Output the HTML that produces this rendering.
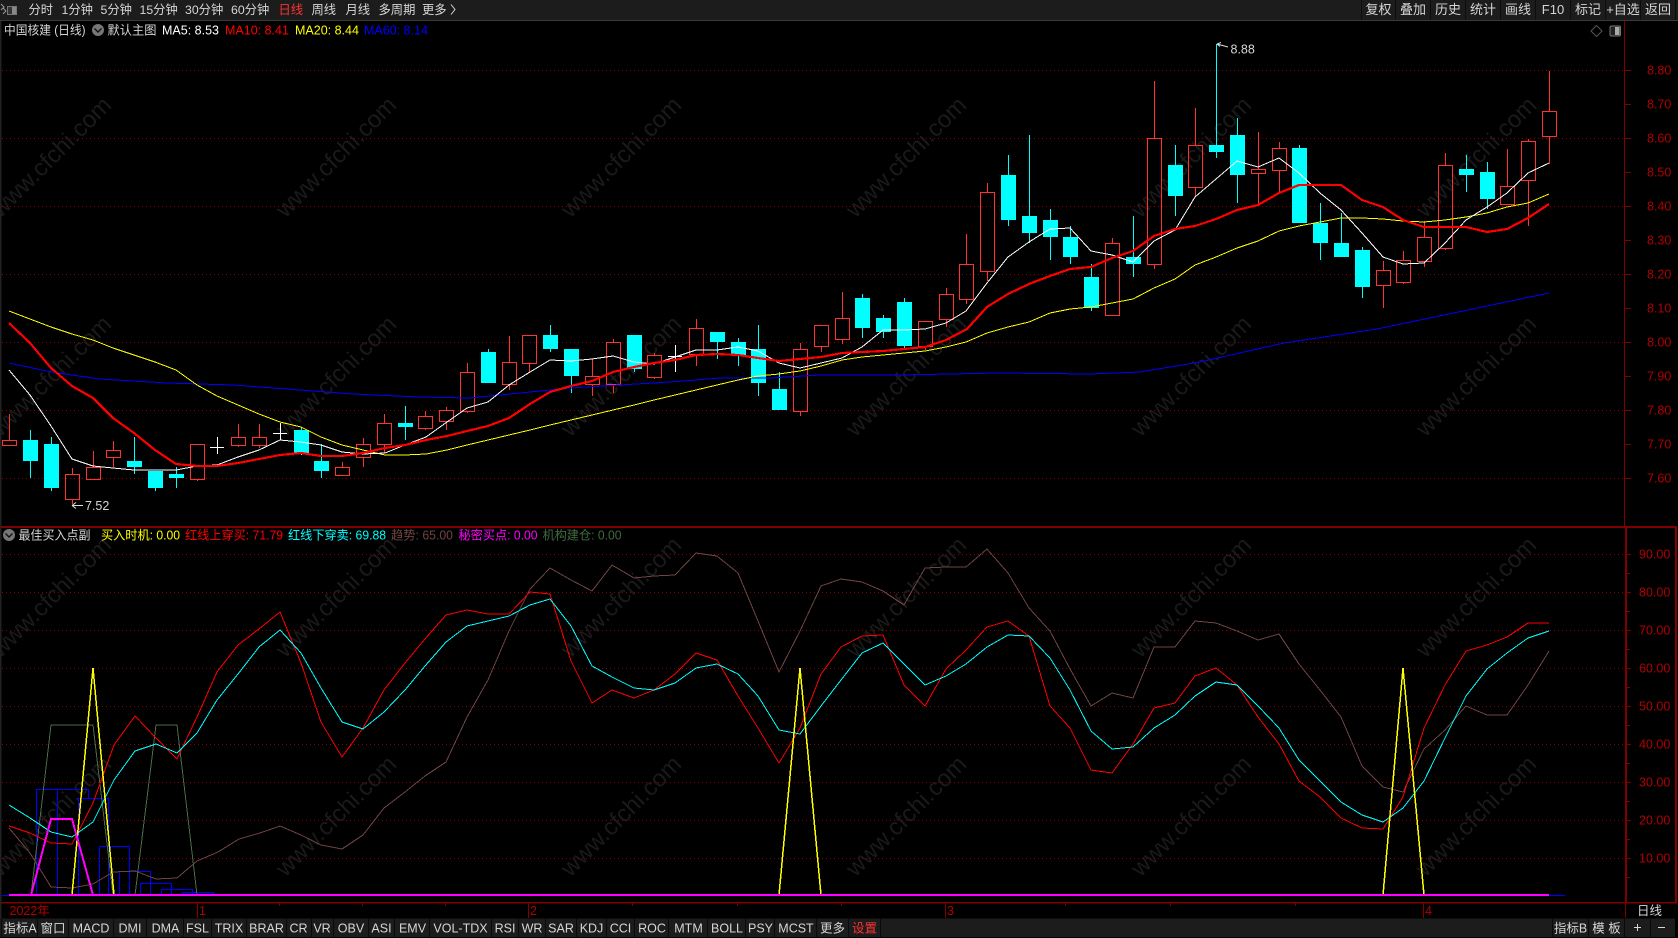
<!DOCTYPE html>
<html lang="zh"><head><meta charset="utf-8"><title>中国核建</title>
<style>
html,body{margin:0;padding:0;background:#000;width:1678px;height:938px;overflow:hidden}
svg{display:block;position:absolute;left:0;top:0}
text{font-family:"Liberation Sans","Noto Sans CJK SC",sans-serif;font-size:12.5px}
.n{fill:#d6d6d6}
.t{fill:#d6d6d6;font-size:12.3px}
.m{text-anchor:middle;fill:#d6d6d6}
.r{fill:#b00000}
.wm text{font-size:24px;fill:#1a1a1a;text-anchor:middle}
.c{shape-rendering:crispEdges;fill:none}
</style></head><body>
<svg width="1678" height="938" viewBox="0 0 1678 938">
<rect width="1678" height="938" fill="#000"/>
<!-- watermark -->
<g class="wm" transform="translate(-4,0)">
<text transform="translate(55,157) rotate(-45)" y="8">www.cfchi.com</text><text transform="translate(340,157) rotate(-45)" y="8">www.cfchi.com</text><text transform="translate(625,157) rotate(-45)" y="8">www.cfchi.com</text><text transform="translate(910,157) rotate(-45)" y="8">www.cfchi.com</text><text transform="translate(1195,157) rotate(-45)" y="8">www.cfchi.com</text><text transform="translate(1480,157) rotate(-45)" y="8">www.cfchi.com</text>
<text transform="translate(55,376) rotate(-45)" y="8">www.cfchi.com</text><text transform="translate(340,376) rotate(-45)" y="8">www.cfchi.com</text><text transform="translate(625,376) rotate(-45)" y="8">www.cfchi.com</text><text transform="translate(910,376) rotate(-45)" y="8">www.cfchi.com</text><text transform="translate(1195,376) rotate(-45)" y="8">www.cfchi.com</text><text transform="translate(1480,376) rotate(-45)" y="8">www.cfchi.com</text>
<text transform="translate(55,597) rotate(-45)" y="8">www.cfchi.com</text><text transform="translate(340,597) rotate(-45)" y="8">www.cfchi.com</text><text transform="translate(625,597) rotate(-45)" y="8">www.cfchi.com</text><text transform="translate(910,597) rotate(-45)" y="8">www.cfchi.com</text><text transform="translate(1195,597) rotate(-45)" y="8">www.cfchi.com</text><text transform="translate(1480,597) rotate(-45)" y="8">www.cfchi.com</text>
<text transform="translate(55,816) rotate(-45)" y="8">www.cfchi.com</text><text transform="translate(340,816) rotate(-45)" y="8">www.cfchi.com</text><text transform="translate(625,816) rotate(-45)" y="8">www.cfchi.com</text><text transform="translate(910,816) rotate(-45)" y="8">www.cfchi.com</text><text transform="translate(1195,816) rotate(-45)" y="8">www.cfchi.com</text><text transform="translate(1480,816) rotate(-45)" y="8">www.cfchi.com</text>
</g>
<!-- grids -->
<path class="c" stroke="#900000" stroke-dasharray="1 3" d="M2 70.5H1625M2 138.5H1625M2 206.5H1625M2 274.5H1625M2 342.5H1625M2 410.5H1625M2 478.5H1625M2 554.5H1625M2 592.5H1625M2 630.5H1625M2 668.5H1625M2 706.5H1625M2 744.5H1625M2 782.5H1625M2 820.5H1625M2 858.5H1625"/>
<!-- axes -->
<path class="c" stroke="#800000" d="M1624.5 21V527M1625 70.5h6M1625 104.5h6M1625 138.5h6M1625 172.5h6M1625 206.5h6M1625 240.5h6M1625 274.5h6M1625 308.5h6M1625 342.5h6M1625 376.5h6M1625 410.5h6M1625 444.5h6M1625 478.5h6M1625 554.5h6M1625 592.5h6M1625 630.5h6M1625 668.5h6M1625 706.5h6M1625 744.5h6M1625 782.5h6M1625 820.5h6M1625 858.5h6M1627 573.5h3M1627 611.5h3M1627 649.5h3M1627 687.5h3M1627 725.5h3M1627 763.5h3M1627 801.5h3M1627 839.5h3M1627 877.5h3"/>
<rect x="0" y="526" width="1677" height="2" fill="#800000"/>
<rect x="1625" y="527" width="2" height="376" fill="#800000"/>
<rect x="1675" y="527" width="2" height="376" fill="#800000"/>
<rect x="0" y="902" width="1677" height="1.5" fill="#800000"/>
<rect x="0" y="20" width="1.5" height="900" fill="#222"/>
<path class="c" stroke="#800000" d="M197.5 903V918M528.5 903V918M945.5 903V918M1423.5 903V918M1625.5 903V918M279.5 903v3M362.5 903v3M445.5 903v3M632.5 903v3M737.5 903v3M841.5 903v3M1065.5 903v3M1170.5 903v3M1295.5 903v3"/>
<!-- axis labels -->
<g class="r">
<text x="1647" y="74.5">8.80</text><text x="1647" y="108.5">8.70</text><text x="1647" y="142.5">8.60</text><text x="1647" y="176.5">8.50</text><text x="1647" y="210.5">8.40</text><text x="1647" y="244.5">8.30</text><text x="1647" y="278.5">8.20</text><text x="1647" y="312.5">8.10</text><text x="1647" y="346.5">8.00</text><text x="1647" y="380.5">7.90</text><text x="1647" y="414.5">7.80</text><text x="1647" y="448.5">7.70</text><text x="1647" y="482.5">7.60</text>
<text x="1639" y="558.5">90.00</text><text x="1639" y="596.5">80.00</text><text x="1639" y="634.5">70.00</text><text x="1639" y="672.5">60.00</text><text x="1639" y="710.5">50.00</text><text x="1639" y="748.5">40.00</text><text x="1639" y="786.5">30.00</text><text x="1639" y="824.5">20.00</text><text x="1639" y="862.5">10.00</text>
<text x="9.5" y="915">2022年</text><text x="199" y="915">1</text><text x="530" y="915">2</text><text x="947" y="915">3</text><text x="1425" y="915">4</text>
</g>
<text class="n" x="1637" y="915">日线</text>
<!-- candles red -->
<path class="c" stroke="#ff3232" d="
M9.5 414V440M2.5 440.5H16.5V445.5H2.5Z
M72.5 468V474M65.5 474.5H79.5V499.5H65.5ZM72.5 499V504
M93.5 451V467M86.5 467.5H100.5V479.5H86.5Z
M113.5 441V450M106.5 450.5H120.5V457.5H106.5ZM113.5 457V467
M190.5 444.5H204.5V479.5H190.5ZM197.5 479V481
M238.5 424V437M231.5 437.5H245.5V445.5H231.5ZM238.5 445V447
M259.5 424V437M252.5 437.5H266.5V445.5H252.5ZM259.5 445V448
M342.5 462V467M335.5 467.5H349.5V475.5H335.5Z
M363.5 438V444M356.5 444.5H370.5V457.5H356.5ZM363.5 457V467
M384.5 414V423M377.5 423.5H391.5V444.5H377.5ZM384.5 444V453
M425.5 411V416M418.5 416.5H432.5V428.5H418.5ZM425.5 428V430
M446.5 407V410M439.5 410.5H453.5V421.5H439.5ZM446.5 421V430
M467.5 363V372M460.5 372.5H474.5V411.5H460.5ZM467.5 411V413
M509.5 336V362M502.5 362.5H516.5V384.5H502.5ZM509.5 384V390
M522.5 335.5H536.5V363.5H522.5ZM529.5 363V373
M592.5 359V376M585.5 376.5H599.5V384.5H585.5ZM592.5 384V396
M613.5 339V342M606.5 342.5H620.5V384.5H606.5ZM613.5 384V393
M654.5 353V355M647.5 355.5H661.5V377.5H647.5ZM654.5 377V379
M696.5 319V328M689.5 328.5H703.5V354.5H689.5ZM696.5 354V366
M800.5 343V349M793.5 349.5H807.5V411.5H793.5ZM800.5 411V416
M814.5 325.5H828.5V346.5H814.5ZM821.5 346V352
M842.5 292V318M835.5 318.5H849.5V339.5H835.5ZM842.5 339V344
M918.5 321.5H932.5V346.5H918.5ZM925.5 346V350
M946.5 288V294M939.5 294.5H953.5V319.5H939.5ZM946.5 319V327
M966.5 234V264M959.5 264.5H973.5V299.5H959.5ZM966.5 299V304
M987.5 183V192M980.5 192.5H994.5V271.5H980.5ZM987.5 271V281
M1112.5 238V243M1105.5 243.5H1119.5V315.5H1105.5Z
M1154.5 81V138M1147.5 138.5H1161.5V264.5H1147.5ZM1154.5 264V269
M1195.5 108V145M1188.5 145.5H1202.5V187.5H1188.5ZM1195.5 187V196
M1258.5 132V169M1251.5 169.5H1265.5V173.5H1251.5ZM1258.5 173V205
M1279.5 142V148M1272.5 148.5H1286.5V170.5H1272.5ZM1279.5 170V193
M1383.5 261V270M1376.5 270.5H1390.5V285.5H1376.5ZM1383.5 285V308
M1403.5 251V260M1396.5 260.5H1410.5V282.5H1396.5ZM1403.5 282V284
M1424.5 221V237M1417.5 237.5H1431.5V261.5H1417.5ZM1424.5 261V267
M1445.5 153V165M1438.5 165.5H1452.5V248.5H1438.5ZM1445.5 248V250
M1507.5 149V186M1500.5 186.5H1514.5V204.5H1500.5Z
M1528.5 139V141M1521.5 141.5H1535.5V180.5H1521.5ZM1528.5 180V226
M1549.5 71V111M1542.5 111.5H1556.5V136.5H1542.5ZM1549.5 136V164"/>
<!-- candles cyan wicks -->
<path class="c" stroke="#00ffff" d="M30.5 430V478M51.5 437V491M134.5 437V474M155.5 471V491M176.5 467V488M301.5 427V455M321.5 444V478M405.5 406V440M488.5 349V383M550.5 325V352M571.5 349V393M634.5 335V372M717.5 332V359M738.5 338V366M758.5 325V396M779.5 372V410M862.5 294V338M883.5 315V338M904.5 298V348M1008.5 155V226M1029.5 135V243M1050.5 209V260M1070.5 226V264M1091.5 264V311M1133.5 216V277M1175.5 145V216M1216.5 44V158M1237.5 118V203M1299.5 145V223M1320.5 203V260M1341.5 213V257M1362.5 247V298M1466.5 155V192M1487.5 162V209"/>
<!-- candles cyan bodies -->
<path class="c" style="fill:#00ffff" d="M23 440H38V461H23ZM44 444H59V488H44ZM127 461H142V467H127ZM148 471H163V488H148ZM169 474H184V478H169ZM294 430H309V453H294ZM314 461H329V471H314ZM398 423H413V427H398ZM481 352H496V383H481ZM543 335H558V349H543ZM564 349H579V376H564ZM627 335H642V369H627ZM710 332H725V342H710ZM731 342H746V355H731ZM751 349H766V383H751ZM772 389H787V410H772ZM855 298H870V328H855ZM876 318H891V332H876ZM897 302H912V346H897ZM1001 175H1016V220H1001ZM1022 216H1037V233H1022ZM1043 220H1058V237H1043ZM1063 237H1078V257H1063ZM1084 277H1099V308H1084ZM1126 257H1141V264H1126ZM1168 165H1183V196H1168ZM1209 145H1224V152H1209ZM1230 135H1245V175H1230ZM1292 148H1307V223H1292ZM1313 223H1328V243H1313ZM1334 243H1349V257H1334ZM1355 250H1370V287H1355ZM1459 169H1474V175H1459ZM1480 172H1495V199H1480Z"/>
<!-- crosses -->
<path class="c" stroke="#fff" d="M210 447.5H224M217.5 437V454M273 433.5H287M280.5 423V440M668 356.5H682M675.5 345V372"/>
<!-- MA60 -->
<polyline class="c" stroke="#0000ff" points="9,363 51,372 100,379 167,383 233,385 300,390 353,394 420,397 470,398 520,393 570,388 620,385 670,382 720,378 770,378 820,375 900,375 1000,373 1090,374 1140,372 1200,362 1284,343 1377,329 1549,293"/>
<!-- MA20 -->
<polyline class="c" stroke="#ffff00" points="9,311 30,319 51,327 72,334 93,340 113,348 134,355 155,362 176,370 197,385 217,396 238,405 259,414 280,422 301,427 321,437 342,445 363,450 385,455 405,455 426,454 447,450 467,445 488,440 509,435 530,430 550,425 571,420 592,415 613,410 634,405 654,400 675,395 696,390 717,385 738,380 758,376 779,374 800,371 821,366 842,360 862,357 883,355 904,353 925,351 946,347 966,342 987,333 1008,327 1029,322 1050,313 1070,309 1091,307 1112,303 1133,299 1154,288 1175,279 1195,265 1216,257 1237,248 1258,241 1279,231 1299,226 1320,222 1341,218 1362,218 1383,219 1403,221 1424,222 1445,220 1466,217 1487,213 1507,207 1528,203 1549,194"/>
<!-- MA5 -->
<polyline class="c" stroke="#ffffff" points="9,370 30,395 51,426 72,459 93,466 113,468 134,470 155,470 176,470 197,466 217,465 238,457 259,450 280,440 301,442 321,445 342,452 363,454 385,453 405,445 426,437 447,422 467,408 488,402 509,385 530,372 550,360 571,361 592,359 613,356 634,362 654,364 675,357 696,350 717,350 738,347 758,351 779,363 800,368 821,363 842,358 862,347 883,330 904,330 925,329 946,323 966,311 987,283 1008,257 1029,242 1050,229 1070,228 1091,251 1112,255 1133,262 1154,241 1175,230 1195,197 1216,179 1237,161 1258,167 1279,158 1299,173 1320,193 1341,210 1362,233 1383,257 1403,264 1424,263 1445,243 1466,220 1487,207 1507,193 1528,173 1549,163"/>
<!-- MA10 -->
<polyline class="c" stroke="#ff0000" stroke-width="2.2" points="9,323 30,343 51,368 72,386 93,398 113,418 134,433 155,450 176,464 197,466 217,466 238,463 259,459 280,455 301,453 321,456 342,456 363,453 385,448 405,445 426,440 447,436 467,431 488,426 509,418 530,404 550,392 571,386 592,381 613,372 634,367 654,363 675,360 696,355 717,354 738,355 758,358 779,361 800,359 821,357 842,353 862,352 883,351 904,349 925,347 946,340 967,329 987,307 1008,294 1029,284 1050,276 1070,269 1091,267 1112,258 1133,251 1154,236 1175,229 1195,226 1216,219 1237,210 1258,205 1279,193 1299,185 1320,185 1341,185 1362,200 1383,207 1403,220 1424,227 1445,227 1466,227 1487,232 1507,229 1528,218 1549,204"/>
<!-- high/low markers -->
<path stroke="#ddd" fill="none" d="M1217 44L1228 47M1217 44l4 -1.5M1217 44l3 2.5M72 505.5H83M72 505.5l4 -3M72 505.5l4 3"/>
<text class="n" x="1230.5" y="53.5">8.88</text>
<text class="n" x="85" y="510">7.52</text>
<!-- sub panel -->
<path class="c" stroke="#0000ff" d="M2 895.5H1565M36.5 895V789.5H88.5V798M57.5 789V895M78.5 895V798.5H108.5V895M99.5 895V846.5H129.5V895M119.5 895V871.5H150.5V895M140.5 895V883.5H171.5V895M161.5 895V889.5H192.5V895M182.5 895V892.5H213.5V895"/>
<polyline class="c" stroke="#4a6b4a" points="31,895 51,725 93,725 113,895"/>
<polyline class="c" stroke="#4a6b4a" points="135,895 156,725 177,725 197,895"/>
<polyline class="c" stroke="#704444" points="9,828 30,853 51,887 72,888 93,884 113,872 135,871 156,879 177,878 197,861 218,852 239,839 260,833 280,826 301,835 321,845 342,849 363,835 384,808 405,792 425,776 446,762 467,717 488,680 509,631 530,589 550,568 571,580 592,591 612,565 634,578 654,576 675,575 696,553 717,556 738,573 758,621 779,672 800,631 821,586 841,579 862,582 883,591 904,605 925,568 946,567 966,567 987,549 1008,573 1029,608 1050,631 1070,669 1091,706 1112,693 1133,698 1154,647 1175,647 1195,621 1216,623 1237,631 1258,640 1279,634 1299,664 1320,690 1341,717 1362,766 1383,787 1403,792 1424,749 1445,730 1466,706 1487,715 1507,715 1528,685 1549,651"/>
<polyline class="c" stroke="#ff0000" points="9,826 30,833 51,843 72,844 93,803 114,745 135,716 156,738 177,759 197,717 217,672 238,645 259,629 280,612 301,663 321,722 342,757 363,728 384,690 405,663 425,639 446,615 467,610 488,614 509,614 530,592 550,594 571,661 592,703 612,690 634,698 654,690 675,674 696,653 717,660 738,696 758,728 779,763 800,728 821,674 841,647 862,636 883,635 904,685 925,706 946,669 966,650 987,627 1008,621 1029,636 1050,706 1070,728 1091,770 1112,773 1133,744 1154,708 1175,703 1195,676 1216,668 1237,685 1258,717 1279,744 1299,781 1320,797 1341,818 1362,828 1383,829 1403,797 1424,728 1445,685 1466,651 1487,645 1507,637 1528,623 1549,623"/>
<polyline class="c" stroke="#00ffff" points="9,805 30,818 51,832 72,837 93,822 114,780 135,751 156,744 177,753 197,733 217,700 238,674 259,647 280,630 301,653 321,688 342,722 363,729 384,712 405,690 425,666 446,642 467,626 488,621 509,616 530,605 550,599 571,626 592,666 612,677 634,688 654,690 675,683 696,668 717,664 738,674 758,696 779,730 800,734 821,706 841,680 862,653 883,643 904,664 925,685 946,676 966,664 987,647 1008,635 1029,636 1050,658 1070,690 1091,731 1112,749 1133,747 1154,728 1175,715 1195,696 1216,682 1237,685 1258,706 1279,728 1299,760 1320,781 1341,802 1362,815 1383,822 1403,808 1424,781 1445,738 1466,696 1487,669 1507,653 1528,638 1549,631"/>
<polyline class="c" stroke="#ffff00" stroke-width="1.5" points="31,895 72,895 93,668 114,895 779,895 800,668 821,895 1383,895 1403,668 1424,895"/>
<polyline class="c" stroke="#ff00ff" stroke-width="2" points="31,895 51,819 72,819 93,895"/>
<path class="c" stroke="#ff00ff" stroke-width="2" d="M9 895H1549"/>
<!-- top bar -->
<rect x="0" y="0" width="1678" height="20" fill="#1c1c1c"/>
<rect x="0" y="20" width="1678" height="1" fill="#3a3a3a"/>
<path fill="none" stroke="#999" d="M1 4l3 3-3 3M3 8l3 3-3 3"/>
<rect x="7.5" y="6.5" width="9" height="8" fill="#333" stroke="#777"/>
<rect x="12" y="7" width="4" height="7" fill="#888"/>
<text class="t" x="28.5" y="14">分时</text>
<text class="t" x="61.5" y="14">1分钟</text>
<text class="t" x="100.5" y="14">5分钟</text>
<text class="t" x="139.5" y="14">15分钟</text>
<text class="t" x="185" y="14">30分钟</text>
<text class="t" x="231" y="14">60分钟</text>
<text x="278.5" y="14" fill="#ff3232" style="font-size:12.3px">日线</text>
<text class="t" x="311.5" y="14">周线</text>
<text class="t" x="345.5" y="14">月线</text>
<text class="t" x="378.5" y="14">多周期</text>
<text class="t" x="422" y="14">更多</text>
<path fill="none" stroke="#d6d6d6" d="M451 4.5l4 5-4 5"/>
<!-- top right buttons -->
<path fill="#0d0d0d" d="M1361 0h1v20h-1zM1395 0h1v20h-1zM1430 0h1v20h-1zM1465 0h1v20h-1zM1500 0h1v20h-1zM1535 0h1v20h-1zM1570 0h1v20h-1zM1605 0h1v20h-1zM1640 0h1v20h-1zM1675 0h1v20h-1z"/>
<g>
<text class="m" style="font-size:13px" x="1378.5" y="14">复权</text>
<text class="m" style="font-size:13px" x="1413" y="14">叠加</text>
<text class="m" style="font-size:13px" x="1448" y="14">历史</text>
<text class="m" style="font-size:13px" x="1483" y="14">统计</text>
<text class="m" style="font-size:13px" x="1518" y="14">画线</text>
<text class="m" style="font-size:13px" x="1553" y="14">F10</text>
<text class="m" style="font-size:13px" x="1588" y="14">标记</text>
<text class="m" style="font-size:13px" x="1623" y="14">+自选</text>
<text class="m" style="font-size:13px" x="1658" y="14">返回</text>
</g>
<!-- header legend -->
<text class="n" x="4" y="34.5" textLength="81.5" lengthAdjust="spacingAndGlyphs">中国核建 (日线)</text>
<circle cx="98" cy="30" r="6" fill="#777"/><path fill="none" stroke="#111" stroke-width="1.4" d="M94.5 28.5L98 32l3.5-3.5"/>
<text class="n" x="107.5" y="34.5" textLength="49" lengthAdjust="spacingAndGlyphs">默认主图</text>
<text x="162" y="34.5" fill="#fff">MA5: 8.53</text>
<text x="225" y="34.5" fill="#ff0000">MA10: 8.41</text>
<text x="295" y="34.5" fill="#ffff00">MA20: 8.44</text>
<text x="364" y="34.5" fill="#0000ff">MA60: 8.14</text>
<path fill="none" stroke="#555" d="M1596.5 25.5l5.5 5.5-5.5 5.5-5.5-5.5z"/>
<rect x="1610" y="26" width="10.5" height="10" rx="1.5" fill="#222" stroke="#777"/><rect x="1615" y="27" width="4.5" height="8" fill="#aaa"/>
<!-- sub legend -->
<circle cx="9" cy="535" r="6" fill="#777"/><path fill="none" stroke="#111" stroke-width="1.4" d="M5.5 533.5L9 537l3.5-3.5"/>
<text class="n" x="18.5" y="539.5" textLength="72" lengthAdjust="spacingAndGlyphs">最佳买入点副</text>
<text x="101" y="539.5" fill="#ffff00" textLength="79" lengthAdjust="spacingAndGlyphs">买入时机: 0.00</text>
<text x="185" y="539.5" fill="#ff0000" textLength="98" lengthAdjust="spacingAndGlyphs">红线上穿买: 71.79</text>
<text x="288" y="539.5" fill="#00ffff" textLength="98" lengthAdjust="spacingAndGlyphs">红线下穿卖: 69.88</text>
<text x="391" y="539.5" fill="#704444" textLength="62" lengthAdjust="spacingAndGlyphs">趋势: 65.00</text>
<text x="458.5" y="539.5" fill="#ff00ff" textLength="79" lengthAdjust="spacingAndGlyphs">秘密买点: 0.00</text>
<text x="542.5" y="539.5" fill="#3f6b3f" textLength="79" lengthAdjust="spacingAndGlyphs">机构建仓: 0.00</text>
<!-- bottom bar -->
<rect x="0" y="918.5" width="1675" height="18.5" fill="#1c1c1c"/>
<path fill="#0a0a0a" d="M1 918h1v19H1zM37 918h1v19h-1zM68 918h1v19h-1zM113 918h1v19h-1zM146 918h1v19h-1zM183 918h1v19h-1zM211 918h1v19h-1zM246 918h1v19h-1zM286 918h1v19h-1zM311 918h1v19h-1zM333 918h1v19h-1zM368 918h1v19h-1zM394 918h1v19h-1zM429 918h1v19h-1zM491 918h1v19h-1zM518 918h1v19h-1zM545 918h1v19h-1zM576 918h1v19h-1zM606 918h1v19h-1zM634 918h1v19h-1zM668 918h1v19h-1zM707 918h1v19h-1zM745 918h1v19h-1zM774 918h1v19h-1zM816 918h1v19h-1zM848 918h1v19h-1zM880 918h1v19h-1zM1552 918h1v19h-1zM1588 918h1v19h-1zM1624 918h1v19h-1zM1650 918h1v19h-1z"/>
<text class="m" x="20" y="932.5">指标A</text>
<text class="m" x="53" y="932.5">窗口</text>
<text class="m" x="91" y="932.5">MACD</text>
<text class="m" x="130" y="932.5">DMI</text>
<text class="m" x="165.5" y="932.5">DMA</text>
<text class="m" x="197.5" y="932.5">FSL</text>
<text class="m" x="229" y="932.5">TRIX</text>
<text class="m" x="266.5" y="932.5">BRAR</text>
<text class="m" x="298.5" y="932.5">CR</text>
<text class="m" x="322" y="932.5">VR</text>
<text class="m" x="351" y="932.5">OBV</text>
<text class="m" x="381.5" y="932.5">ASI</text>
<text class="m" x="412.5" y="932.5">EMV</text>
<text class="m" x="460.5" y="932.5">VOL-TDX</text>
<text class="m" x="505" y="932.5">RSI</text>
<text class="m" x="532" y="932.5">WR</text>
<text class="m" x="561" y="932.5">SAR</text>
<text class="m" x="591.5" y="932.5">KDJ</text>
<text class="m" x="620.5" y="932.5">CCI</text>
<text class="m" x="652" y="932.5">ROC</text>
<text class="m" x="688.5" y="932.5">MTM</text>
<text class="m" x="727" y="932.5">BOLL</text>
<text class="m" x="760.5" y="932.5">PSY</text>
<text class="m" x="796" y="932.5">MCST</text>
<text class="m" x="832.5" y="932.5">更多</text>
<text x="864.5" y="932.5" text-anchor="middle" fill="#ff3232">设置</text>
<text class="m" x="1570.5" y="932.5">指标B</text>
<text class="m" x="1606.5" y="932.5">模 板</text>
<path stroke="#d6d6d6" fill="none" class="c" d="M1634 927.5h7M1637.5 924v7M1658 927.5h7"/>
</svg>
</body></html>
